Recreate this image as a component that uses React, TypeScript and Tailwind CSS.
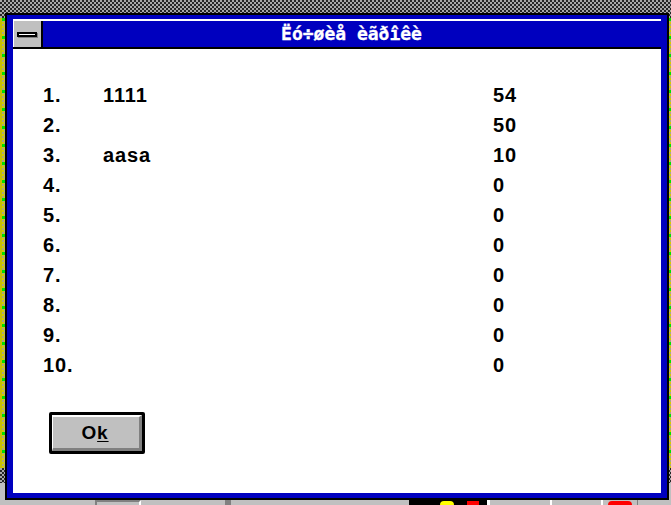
const rows = [
  { n: "1.", name: "1111", score: "54" },
  { n: "2.", name: "", score: "50" },
  { n: "3.", name: "aasa", score: "10" },
  { n: "4.", name: "", score: "0" },
  { n: "5.", name: "", score: "0" },
  { n: "6.", name: "", score: "0" },
  { n: "7.", name: "", score: "0" },
  { n: "8.", name: "", score: "0" },
  { n: "9.", name: "", score: "0" },
  { n: "10.", name: "", score: "0" },
];

const label = "font-['Liberation_Sans',sans-serif] font-bold tracking-[0.9px]";

function Taskbar() {
  return (
    <div className="flex h-[5px] shrink-0 bg-[#c0c0c0]">
      <div className="ml-[95px] w-[46px] border-l-2 border-r-2 border-t-2 border-[#808080] border-r-white" />
      <div className="ml-[84px] w-[6px] bg-[#808080]" />
      <div className="ml-[178px] flex w-[78px] items-end bg-black pl-[31px]">
        <div className="h-[4px] w-[14px] rounded-t-full bg-[#ffff00]" />
        <div className="ml-[13px] h-[4px] w-[12px] bg-[#ff0000]" />
      </div>
      <div className="w-[3px] bg-white" />
      <div className="ml-[60px] w-[2px] bg-white" />
      <div className="ml-[49px] w-[2px] bg-white" />
      <div className="ml-[5px] mt-[1px] w-[24px] rounded-t-full bg-[#ff0000]" />
      <div className="ml-[5px] w-[1px] bg-[#808080]" />
    </div>
  );
}

export default function App() {
  return (
    <div className="flex h-[505px] w-[671px] flex-col overflow-hidden bg-[#c0c0c0]">
      <div className="relative flex-1">
        {/* desktop wallpaper */}
        <div className="absolute inset-x-0 top-0 h-[483px] bg-[#808080] bg-[conic-gradient(#262626_25%,#a8a8a8_0_50%,#262626_0_75%,#a8a8a8_0)] bg-[length:4px_4px]" />
        <div className="absolute inset-x-0 top-[18px] h-[450px] bg-[#c8c000] bg-[linear-gradient(90deg,#c8c000_2px,transparent_2px),linear-gradient(#00e000_0_3px,transparent_3px),conic-gradient(#d4cc00_25%,#a8a880_0_50%,#d4cc00_0_75%,#a8a880_0)] bg-[length:100%_100%,100%_18px,4px_4px]" />

        {/* the dialog */}
        <div className="absolute left-[5px] top-[13px] flex h-[487px] w-[664px] flex-col border-2 border-black bg-[#0000bf] px-[6px] pb-[5px] pt-[4px]">
          <div className="flex flex-1 flex-col bg-white">
            <div className="mt-[2px] flex h-[28px] border-b-2 border-black pl-[1px]">
              <div className="flex w-[29px] items-center justify-center border-r-2 border-black bg-[#c0c0c0] pr-[1px]">
                <div className="h-[5px] w-[20px] border-2 border-black bg-white shadow-[1px_1px_0_#808080]" />
              </div>
              <div className="flex flex-1 items-center justify-center bg-[#0000bf] pb-[1px] pr-[1px] font-['DejaVu_Sans_Mono',monospace] text-[18px] font-bold leading-none text-white [-webkit-text-stroke:0.3px_white]">
                Ëó÷øèå èãðîêè
              </div>
            </div>

            <div className={`ml-[30px] mt-[31px] flex flex-col text-[20px] leading-[30px] text-black ${label}`}>
              {rows.map((r) => (
                <div key={r.n} className="flex h-[30px]">
                  <span className="w-[60px]">{r.n}</span>
                  <span className="w-[390px]">{r.name}</span>
                  <span>{r.score}</span>
                </div>
              ))}
            </div>

            <div className="ml-[36px] mt-[32px] h-[42px] w-[96px] rounded-[2px] border-[3px] border-black bg-[#c0c0c0]">
              <button className={`flex h-full w-full items-center justify-center border-b-[3px] border-l border-r-[3px] border-t-2 border-b-[#808080] border-l-white border-r-[#808080] border-t-white pr-[2px] text-[19px] leading-none text-black ${label}`}>
                O<span className="underline underline-offset-2">k</span>
              </button>
            </div>
          </div>
        </div>
      </div>
      <Taskbar />
    </div>
  );
}
